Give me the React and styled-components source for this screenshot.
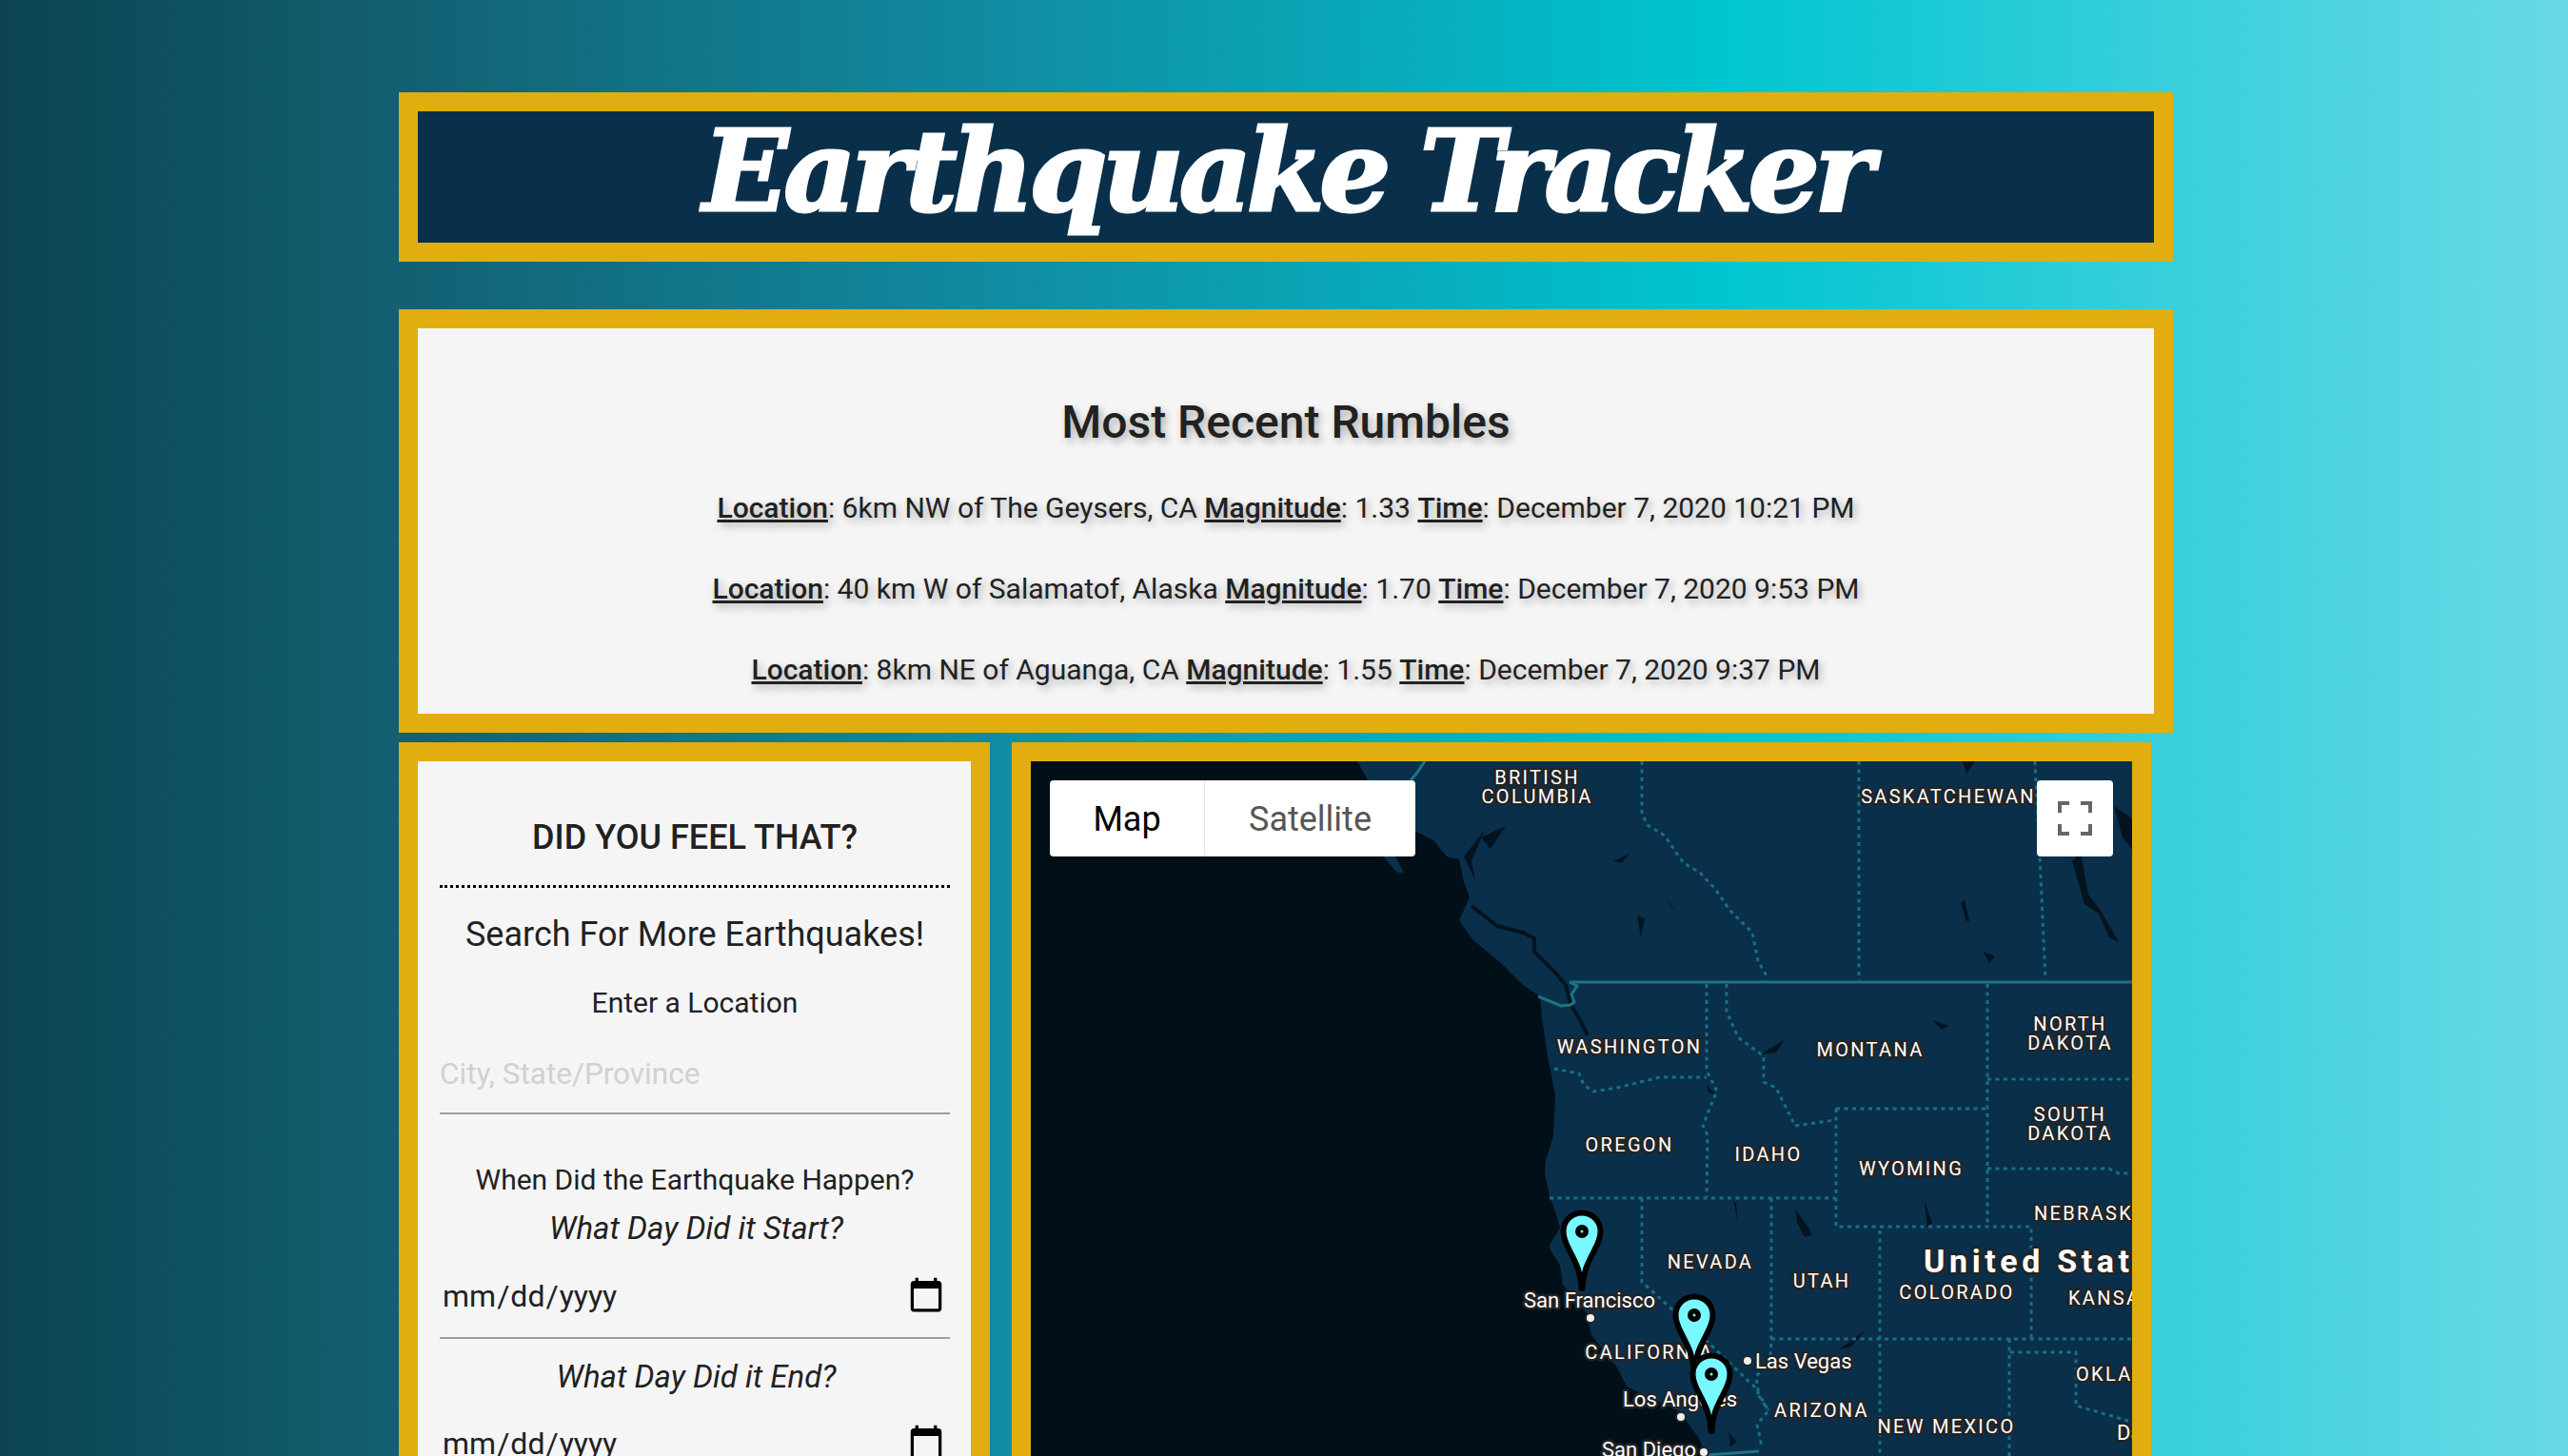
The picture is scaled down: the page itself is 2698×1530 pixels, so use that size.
import React from "react";
import styled, { createGlobalStyle } from "styled-components";

const GOLD = "#e2ad0f";

const GlobalStyle = createGlobalStyle`
html, body {
  margin: 0;
  height: 100%;
  overflow: hidden;
}
body {
  font-family: Roboto, "Liberation Sans", sans-serif;
  color: #212121;
  background: linear-gradient(to right, #0b4450 0%, #125f70 15%, #118aa0 38%, #00c5d0 67%, #6ad9e6 100%);
}
`;

const Page = styled.div`
  width: 1864px;
  margin-left: 419px;
  padding-top: 97px;
`;

const Banner = styled.header`
  border: 20px solid ${GOLD};
  background: #0a2f4b;
  height: 126px;
  padding-bottom: 12px;
  display: flex;
  align-items: center;
  justify-content: center;
`;

const Title = styled.h1`
  margin: 0;
  font-family: "DejaVu Serif", "Liberation Serif", serif;
  font-weight: 700;
  font-style: italic;
  font-size: 118px;
  letter-spacing: -5.3px;
  line-height: 120px;
  color: #fff;
  -webkit-text-stroke: 3px #fff;
`;

const Recent = styled.section`
  margin-top: 50px;
  border: 20px solid ${GOLD};
  background: #f5f5f5;
  height: 405px;
  text-align: center;
  text-shadow: 3px 4px 8px rgba(0, 0, 0, 0.3);
`;

const RecentTitle = styled.h2`
  margin: 0;
  padding-top: 70px;
  font-size: 48px;
  line-height: 58px;
  font-weight: 500;
`;

const Quake = styled.p`
  margin: 0;
  font-size: 30px;
  line-height: 40px;
  font-weight: 400;
  padding-top: 45px;
  &:first-of-type {
    padding-top: 41px;
  }
`;

const Key = styled.span`
  font-weight: 500;
  text-decoration: underline;
`;

const Row = styled.div`
  margin-top: 10px;
  display: flex;
  align-items: flex-start;
  gap: 23px;
`;

const SearchCard = styled.section`
  width: 536px;
  border: 20px solid ${GOLD};
  background: #f5f5f5;
  padding: 0 22px 40px 23px;
  text-align: center;
`;

const SearchTitle = styled.h3`
  margin: 0;
  padding-top: 57px;
  padding-bottom: 27px;
  font-size: 36px;
  line-height: 46px;
  font-weight: 500;
  text-transform: uppercase;
  border-bottom: 3px dotted #000;
`;

const SearchLead = styled.p`
  margin: 0;
  padding-top: 26px;
  font-size: 36px;
  line-height: 46px;
`;

const FieldLabel = styled.label`
  display: block;
  font-size: ${(p) => p.$size || 30}px;
  line-height: 40px;
  font-style: ${(p) => (p.$italic ? "italic" : "normal")};
  padding-top: ${(p) => p.$top}px;
  padding-left: ${(p) => (p.$italic ? 3 : 0)}px;
`;

const TextField = styled.input`
  display: block;
  width: 100%;
  box-sizing: border-box;
  height: 83px;
  margin-top: 14px;
  padding: 0 0 1px;
  border: 0;
  border-bottom: 2px solid #9e9e9e;
  outline: 0;
  background: transparent;
  font: 31.5px Roboto, sans-serif;
  &::placeholder {
    color: #d1d1d1;
    opacity: 1;
  }
`;

const DateField = styled.input`
  display: block;
  width: 100%;
  box-sizing: border-box;
  height: 88px;
  margin-top: ${(p) => p.$top}px;
  padding: 0 4px 0 2px;
  border: 0;
  border-bottom: 2px solid #9e9e9e;
  outline: 0;
  background: transparent;
  font: 32px Roboto, sans-serif;
  color: #212121;
  &::-webkit-calendar-picker-indicator {
    width: 42px;
    height: 42px;
    margin: 0;
    padding: 0;
  }
`;

const MapFrame = styled.section`
  position: relative;
  width: 1157px;
  height: 900px;
  border: 20px solid ${GOLD};
  background: #010f18;
  overflow: hidden;
`;

const MapDrawing = styled.svg`
  display: block;
  width: 1157px;
  height: 900px;
`;

const MapType = styled.div`
  position: absolute;
  top: 20px;
  left: 20px;
  display: flex;
  height: 80px;
  background: #fff;
  border-radius: 4px;
`;

const MapTypeButton = styled.button`
  width: ${(p) => p.$width}px;
  height: 80px;
  border: 0;
  border-left: ${(p) => (p.$active ? "0" : "1px solid #e6e6e6")};
  background: transparent;
  font: 36px Roboto, sans-serif;
  color: ${(p) => (p.$active ? "#000" : "#565656")};
  padding: 2px 0 0;
`;

const FullscreenButton = styled.button`
  position: absolute;
  top: 20px;
  right: 20px;
  width: 80px;
  height: 80px;
  border: 0;
  border-radius: 4px;
  background: #fff;
  padding: 0;
  display: flex;
  align-items: center;
  justify-content: center;
`;

const MapLabel = styled.text`
  font-family: Roboto, sans-serif;
  font-size: ${(p) => p.$size || 20}px;
  font-weight: ${(p) => (p.$bold ? 700 : 400)};
  letter-spacing: ${(p) => (p.$spacing === undefined ? 2.3 : p.$spacing)}px;
  fill: #fff;
  stroke: #242424;
  stroke-width: 5px;
  stroke-linejoin: round;
  paint-order: stroke;
`;

// [text, x, baseline]
const STATE_LABELS = [
  ["BRITISH", 1615, 824],
  ["COLUMBIA", 1615, 844],
  ["SASKATCHEWAN", 2047, 844],
  ["WASHINGTON", 1712, 1107],
  ["MONTANA", 1965, 1110],
  ["NORTH", 2175, 1083],
  ["DAKOTA", 2175, 1103],
  ["SOUTH", 2175, 1178],
  ["DAKOTA", 2175, 1198],
  ["OREGON", 1712, 1210],
  ["IDAHO", 1858, 1220],
  ["WYOMING", 2008, 1235],
  ["NEVADA", 1797, 1333],
  ["UTAH", 1914, 1353],
  ["COLORADO", 2056, 1365],
  ["CALIFORNIA", 1733, 1428],
  ["ARIZONA", 1914, 1489],
  ["NEW MEXICO", 2045, 1506],
];

const CLIPPED_LABELS = [
  ["NEBRASKA", 2137, 1282],
  ["KANSAS", 2173, 1371],
  ["OKLAHOMA", 2181, 1451],
];

const CITY_LABELS = [
  ["San Francisco", 1601, 1374],
  ["Las Vegas", 1844, 1438],
  ["Los Angeles", 1705, 1478],
  ["San Diego", 1683, 1531],
  ["Dallas", 2224, 1513],
];

const CITY_DOTS = [
  [1671, 1385],
  [1836, 1430],
  [1766, 1489],
  [1790, 1526],
];

const MARKERS = [
  [1662, 1294],
  [1780, 1382],
  [1798, 1444],
];

const COAST =
  "M1426 800 L1440 825 L1480 870 L1506 883 L1520 900 L1533 903 L1538 927 L1544 943 L1533 967 L1547 987 L1578 1013 L1600 1035 L1618 1047 L1620 1070 L1626 1110 L1634 1150 L1632 1193 L1624 1220 L1623 1233 L1628 1257 L1634 1273 L1639 1290 L1627 1310 L1639 1330 L1642 1350 L1667 1380 L1672 1403 L1699 1437 L1709 1457 L1764 1483 L1784 1510 L1793 1530 L1810 1600 L1900 1700 L2240 1700 L2240 800 Z";

const SMALL_ISLAND = "M1453 900 L1466 900 L1475 917 L1468 917 Z";

// straits and fjords between the island and the mainland
const STRAIT = "M1546 952 L1573 973 L1600 980 L1612 986 L1612 1000 L1632 1020 L1645 1035 L1650 1055 L1660 1072 L1668 1088";

const DARK_WATER = [
  "M1556 880 L1582 868 L1566 892 Z",
  "M1538 900 L1560 872 L1546 905 L1550 925 Z",
  "M1720 962 L1724 985 L1728 965 Z",
  "M1695 905 L1712 897 L1704 907 Z",
  "M1754 950 L1762 958 L1748 942 Z",
  "M1793 1140 L1802 1150 L1795 1148 Z",
  "M1875 1092 L1866 1106 L1850 1108 Z",
  "M2030 1072 L2048 1078 L2040 1082 Z",
  "M1886 1270 L1900 1290 L1904 1298 L1896 1300 L1888 1285 Z",
  "M2062 800 L2075 800 L2066 813 Z",
  "M2221 847 L2240 860 L2240 893 L2230 880 Z",
  "M2177 905 L2186 895 L2194 940 L2206 955 L2226 990 L2216 985 L2205 960 L2190 950 Z",
  "M2084 1000 L2096 1005 L2090 1012 Z",
  "M2060 950 L2066 968 L2069 968 L2064 945 Z",
  "M2022 1262 L2030 1285 L2025 1290 Z",
  "M1821 1260 L1826 1285 L1824 1265 Z",
  "M1945 1415 L1960 1398 L1932 1418 Z",
  "M1816 1505 L1825 1515 L1818 1520 Z",
];

const COUNTRY_LINES = [
  "M1649 1032 L2240 1032",
  "M1649 1032 L1657 1036 L1651 1045 L1654 1053 L1650 1056 L1640 1057 L1616 1047",
  "M1497 800 L1488 813 L1482 820",
  "M1793 1529 L1848 1525",
];

const STATE_LINES = [
  "M1725 800 L1725 855 L1731 867 L1749 878 L1759 893 L1769 907 L1786 917 L1801 933 L1818 957 L1841 980 L1847 1010 L1858 1029",
  "M1953 800 L1953 1030",
  "M2138 800 L2143 900 L2149 1029",
  "M1793 1034 L1793 1125 L1804 1147 L1801 1153 L1789 1183 L1794 1193 L1793 1258",
  "M1814 1034 L1814 1063 L1826 1090 L1853 1110 L1853 1137 L1866 1143 L1878 1167 L1886 1183 L1928 1177",
  "M1633 1123 L1659 1128 L1664 1140 L1674 1147 L1699 1143 L1744 1132 L1793 1132",
  "M1929 1165 L2088 1165",
  "M1929 1165 L1929 1289 L2134 1289 L2134 1407",
  "M2088 1034 L2088 1289",
  "M2088 1134 L2240 1134",
  "M2088 1228 L2216 1228 L2226 1233 L2240 1233",
  "M1628 1259 L1928 1259",
  "M1725 1259 L1725 1347 L1794 1410 L1843 1457 L1858 1482 L1846 1497 L1851 1520",
  "M1861 1259 L1861 1407 L1860 1425 L1845 1447 L1848 1467 L1858 1482",
  "M1975 1293 L1975 1530",
  "M1861 1407 L2240 1407",
  "M2111 1407 L2111 1530",
  "M2112 1421 L2181 1421 L2181 1477 L2236 1493",
];

const MapBase = () => (
  <MapDrawing viewBox="1083 800 1157 900">
    <path d={COAST} fill="#0a2f4b" />
    <path d={SMALL_ISLAND} fill="#0a2f4b" />
    <path d={STRAIT} fill="none" stroke="#021420" strokeWidth="4" strokeLinejoin="round" />
    {DARK_WATER.map((d, i) => (
      <path key={i} d={d} fill="#021420" />
    ))}
    {STATE_LINES.map((d, i) => (
      <path key={i} d={d} fill="none" stroke="#17717f" strokeWidth="3" strokeDasharray="4 4.5" />
    ))}
    {COUNTRY_LINES.map((d, i) => (
      <path key={i} d={d} fill="none" stroke="#1c7482" strokeWidth="3" />
    ))}
    {STATE_LABELS.map(([text, x, y], i) => (
      <MapLabel key={i} x={x} y={y} textAnchor="middle">{text}</MapLabel>
    ))}
    {CLIPPED_LABELS.map(([text, x, y], i) => (
      <MapLabel key={i} x={x} y={y}>{text}</MapLabel>
    ))}
    <MapLabel x={2021} y={1337} $size={34} $bold $spacing={4.6}>United States</MapLabel>
    {CITY_DOTS.map(([x, y], i) => (
      <circle key={i} cx={x} cy={y} r="5" fill="#f0f0f0" stroke="#242424" strokeWidth="2" />
    ))}
    {CITY_LABELS.map(([text, x, y], i) => (
      <MapLabel key={i} x={x} y={y} $size={22} $spacing={0}>{text}</MapLabel>
    ))}
    {MARKERS.map(([x, y], i) => (
      <g key={i} transform={`translate(${x} ${y})`}>
        <path
          d="M0 -19.5 C11 -19.5 19.5 -11 19.5 0 C19.5 9 15 16 12 22 C7 32 1 42 0.5 60 L-0.5 60 C-1 42 -7 32 -12 22 C-15 16 -19.5 9 -19.5 0 C-19.5 -11 -11 -19.5 0 -19.5 Z"
          fill="#77f9ff"
          stroke="#000"
          strokeWidth="6"
          strokeLinejoin="round"
        />
        <circle r="7" fill="#000" />
        <circle r="1.5" fill="#77f9ff" />
      </g>
    ))}
  </MapDrawing>
);

const QUAKES = [
  ["6km NW of The Geysers, CA", "1.33", "December 7, 2020 10:21 PM"],
  ["40 km W of Salamatof, Alaska", "1.70", "December 7, 2020 9:53 PM"],
  ["8km NE of Aguanga, CA", "1.55", "December 7, 2020 9:37 PM"],
];

export default function App() {
  return (
    <>
      <GlobalStyle />
      <Page>
        <Banner>
          <Title>Earthquake Tracker</Title>
        </Banner>
        <Recent>
          <RecentTitle>Most Recent Rumbles</RecentTitle>
          {QUAKES.map(([place, mag, time]) => (
            <Quake key={place}>
              <Key>Location</Key>: {place} <Key>Magnitude</Key>: {mag} <Key>Time</Key>: {time}
            </Quake>
          ))}
        </Recent>
        <Row>
          <SearchCard>
            <SearchTitle>Did You Feel That?</SearchTitle>
            <SearchLead>Search For More Earthquakes!</SearchLead>
            <FieldLabel $top={29}>Enter a Location</FieldLabel>
            <TextField type="text" placeholder="City, State/Province" />
            <FieldLabel $top={49}>When Did the Earthquake Happen?</FieldLabel>
            <FieldLabel $italic $size={33} $top={11}>What Day Did it Start?</FieldLabel>
            <DateField type="date" $top={8} />
            <FieldLabel $italic $size={33} $top={20}>What Day Did it End?</FieldLabel>
            <DateField type="date" $top={7} />
          </SearchCard>
          <MapFrame>
            <MapBase />
            <MapType>
              <MapTypeButton $active $width={162}>Map</MapTypeButton>
              <MapTypeButton $width={222}>Satellite</MapTypeButton>
            </MapType>
            <FullscreenButton>
              <svg width="36" height="36" viewBox="0 0 36 36" fill="none" stroke="#666" strokeWidth="4">
                <path d="M2 12 V2 H12 M24 2 H34 V12 M34 24 V34 H24 M12 34 H2 V24" />
              </svg>
            </FullscreenButton>
          </MapFrame>
        </Row>
      </Page>
    </>
  );
}
